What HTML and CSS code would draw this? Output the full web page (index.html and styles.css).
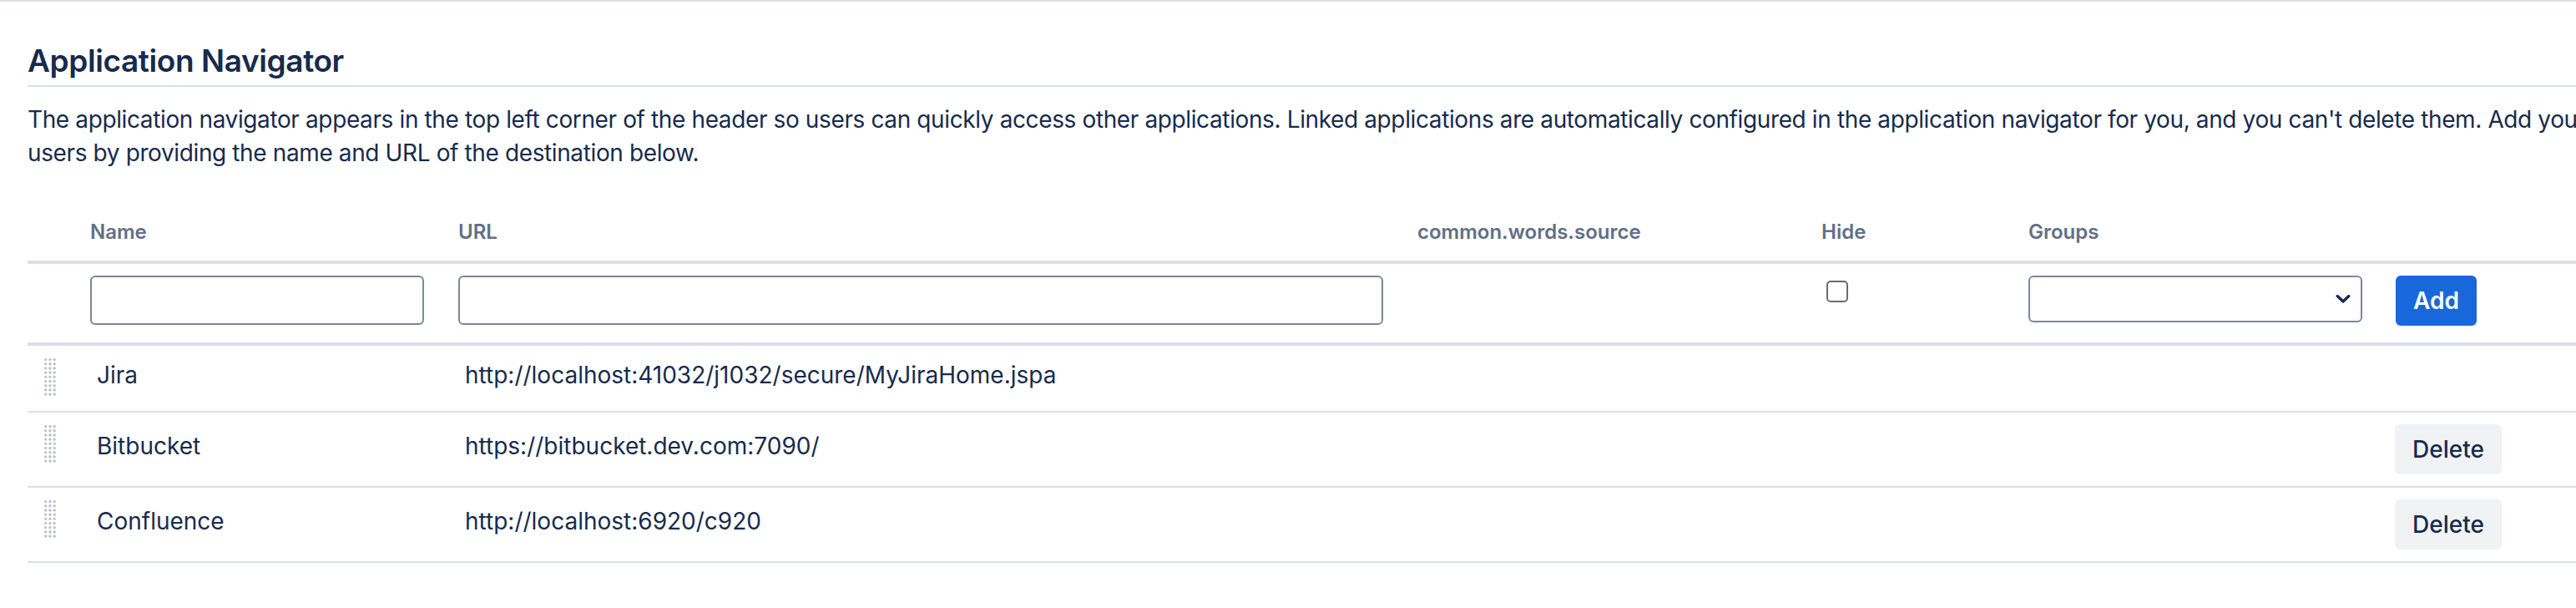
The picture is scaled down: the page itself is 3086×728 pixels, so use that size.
FILE: index.html
```html
<!DOCTYPE html>
<html lang="en">
<head>
<meta charset="utf-8">
<title>Application Navigator</title>
<link rel="stylesheet" href="styles.css">
</head>
<body>
<div class="topbar"></div>
<main class="page">
  <h2 class="title">Application Navigator</h2>
  <p class="intro">The application navigator appears in the top left corner of the header so users can quickly access other applications. Linked applications are automatically configured in the application navigator for you, and you can't delete them. Add your own links for users by providing the name and URL of the destination below.</p>

  <div class="nav-table">
    <div class="row head">
      <div class="cell"></div>
      <div class="cell">Name</div>
      <div class="cell">URL</div>
      <div class="cell">common.words.source</div>
      <div class="cell">Hide</div>
      <div class="cell">Groups</div>
      <div class="cell"></div>
    </div>

    <div class="row create">
      <div class="cell"></div>
      <div class="cell"><input class="field name-field" type="text" aria-label="Name"></div>
      <div class="cell"><input class="field url-field" type="text" aria-label="URL"></div>
      <div class="cell"></div>
      <div class="cell"><input class="check" type="checkbox" aria-label="Hide"></div>
      <div class="cell">
        <div class="select-wrap">
          <select class="select" aria-label="Groups"><option></option></select>
          <svg class="chevron" viewBox="0 0 18 10" width="18" height="10" aria-hidden="true"><path d="M2.2 1.6 9 8 15.8 1.6" fill="none" stroke="#172b4d" stroke-width="3.4" stroke-linecap="round" stroke-linejoin="round"/></svg>
        </div>
      </div>
      <div class="cell"><button class="btn btn-primary" type="button">Add</button></div>
    </div>

    <div class="row entry">
      <div class="cell"><span class="handle"></span></div>
      <div class="cell text">Jira</div>
      <div class="cell text">http://localhost:41032/j1032/secure/MyJiraHome.jspa</div>
      <div class="cell"></div>
      <div class="cell"></div>
      <div class="cell"></div>
      <div class="cell"></div>
    </div>

    <div class="row entry">
      <div class="cell"><span class="handle"></span></div>
      <div class="cell text">Bitbucket</div>
      <div class="cell text">https://bitbucket.dev.com:7090/</div>
      <div class="cell"></div>
      <div class="cell"></div>
      <div class="cell"></div>
      <div class="cell"><button class="btn btn-default" type="button">Delete</button></div>
    </div>

    <div class="row entry">
      <div class="cell"><span class="handle"></span></div>
      <div class="cell text">Confluence</div>
      <div class="cell text">http://localhost:6920/c920</div>
      <div class="cell"></div>
      <div class="cell"></div>
      <div class="cell"></div>
      <div class="cell"><button class="btn btn-default" type="button">Delete</button></div>
    </div>
  </div>
</main>
</body>
</html>
```

FILE: styles.css
```css
html, body {
  margin: 0;
  padding: 0;
  overflow: hidden;
  background: #ffffff;
}

body {
  font-family: Inter, "Noto Sans", "Liberation Sans", sans-serif;
  color: #172b4d;
}

.topbar {
  height: 2px;
  background: #dcdfe4;
}

.page {
  width: 3500px;
  padding: 0 0 0 33px;
}

.title {
  margin: 47px 0 0;
  padding-bottom: 6px;
  border-bottom: 2px solid #dcdfe4;
  font-size: 37px;
  line-height: 47px;
  font-weight: 600;
  letter-spacing: -0.4px;
  color: #172b4d;
}

.intro {
  margin: 19px 0 0;
  width: 3268px;
  font-size: 28px;
  line-height: 40px;
  letter-spacing: -0.38px;
}

.nav-table {
  margin-top: 41px;
}

.row {
  display: grid;
  grid-template-columns: 75px 441px 1149px 484px 248px 440px 1fr;
}

.head {
  padding: 18px 0;
  border-bottom: 4px solid #dcdfe4;
  font-size: 24px;
  line-height: 32px;
  font-weight: 600;
  color: #626f86;
}

.create {
  padding: 14px 0 20px;
  border-bottom: 4px solid #dcdfe4;
  align-items: start;
}

.field {
  box-sizing: border-box;
  display: block;
  height: 59px;
  margin: 0;
  padding: 0 14px;
  border: 2px solid #7d8799;
  border-radius: 6px;
  background: #ffffff;
  font: inherit;
  font-size: 28px;
}

.name-field { width: 400px; }
.url-field { width: 1108px; }

.check {
  appearance: none;
  display: block;
  box-sizing: border-box;
  width: 26px;
  height: 26px;
  margin: 6px 0 0 6px;
  border: 2px solid #6b6b6b;
  border-radius: 5px;
  background: #ffffff;
}

.select-wrap {
  position: relative;
  width: 400px;
}

.select {
  appearance: none;
  box-sizing: border-box;
  display: block;
  width: 400px;
  height: 56px;
  margin: 0;
  border: 2px solid #7d8799;
  border-radius: 6px;
  background: #ffffff;
  font: inherit;
  font-size: 28px;
}

.chevron {
  position: absolute;
  right: 14px;
  top: 23px;
}

.btn {
  box-sizing: border-box;
  height: 60px;
  margin: 0;
  border: 0;
  border-radius: 6px;
  font-family: inherit;
  font-size: 28px;
  line-height: 60px;
  cursor: pointer;
}

.btn-primary {
  width: 97px;
  padding: 0;
  background: #1868db;
  color: #ffffff;
  font-weight: 600;
}

.btn-default {
  width: 128px;
  margin-left: -1px;
  padding: 0;
  background: #f1f2f4;
  color: #172b4d;
  font-weight: 500;
}

.entry {
  min-height: 50px;
  padding: 14px 0;
  border-bottom: 2px solid #dcdfe4;
  align-items: center;
  font-size: 28px;
  line-height: 40px;
}

.entry .text {
  padding: 0 0 9px 8px;
}

.entry .cell:first-child {
  align-self: start;
}

.handle {
  display: block;
  width: 16px;
  height: 46px;
  margin-left: 19px;
  background-image: radial-gradient(circle, #b9bfc9 1.3px, transparent 1.8px);
  background-size: 5.3px 5.2px;
  background-position: 0 0;
}
```
